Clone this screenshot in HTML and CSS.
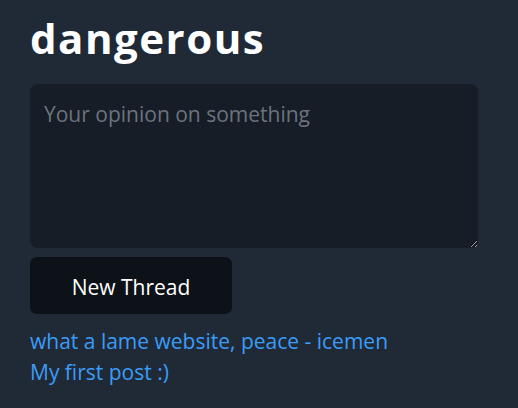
FILE: index.html
```html
<!DOCTYPE html>
<html>
<head>
<meta charset="utf-8">
<link rel="stylesheet" href="styles.css">
</head>
<body>
<main class="page">
  <h1 class="title">dangerous</h1>
  <form class="composer">
    <textarea class="opinion" placeholder="Your opinion on something"></textarea>
    <button type="button" class="submit">New Thread</button>
  </form>
  <ul class="threads">
    <li><a href="#" class="thread-link">what a lame website, peace - icemen</a></li>
    <li><a href="#" class="thread-link">My first post :)</a></li>
  </ul>
</main>
</body>
</html>
```
FILE: styles.css
```css
html, body {
  margin: 0;
  padding: 0;
  background: #202a37;
  height: 100%;
}
body {
  font-family: "Open Sans", "Noto Sans", sans-serif;
  color: #fff;
}
.page {
  padding: 0 30px;
}
.title {
  margin: 0;
  padding-top: 10px;
  font-size: 42px;
  line-height: 56px;
  letter-spacing: 1.5px;
  font-weight: 700;
}
.composer {
  margin-top: 18px;
  display: flex;
  flex-direction: column;
  align-items: flex-start;
  gap: 9px;
}
.opinion {
  box-sizing: border-box;
  width: 448px;
  height: 164px;
  background: #161d27;
  border: none;
  border-radius: 8px;
  padding: 16px 14px 14px;
  font-family: inherit;
  font-size: 21px;
  color: #fff;
  outline: none;
  margin: 0;
}
.opinion::placeholder {
  color: #6c737d;
}
.submit {
  width: 202px;
  height: 57px;
  background: #0d1218;
  color: #fff;
  border: none;
  border-radius: 7px;
  font-family: inherit;
  font-size: 21px;
  padding: 2px 0 0;
}
.threads {
  list-style: none;
  margin: 12px 0 0;
  padding: 0;
}
.threads li {
  font-size: 21px;
  line-height: 31px;
}
.thread-link {
  color: #3b9cf6;
  text-decoration: none;
}
```
